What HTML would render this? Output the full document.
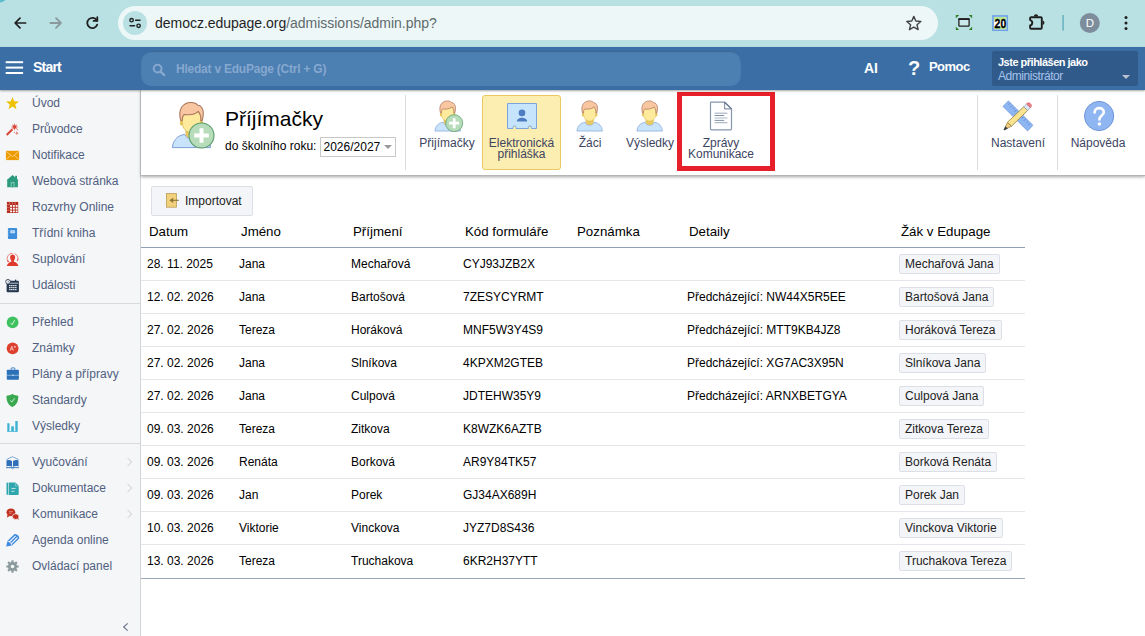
<!DOCTYPE html>
<html lang="cs">
<head>
<meta charset="utf-8">
<title>Přijímačky</title>
<style>
*{box-sizing:border-box;margin:0;padding:0}
html,body{width:1145px;height:636px;overflow:hidden;background:#fff}
body{font-family:"Liberation Sans",sans-serif;font-size:12px;color:#000;position:relative}
.abs{position:absolute}
/* ---------- browser chrome ---------- */
#chrome{position:absolute;left:0;top:0;width:1145px;height:47px;background:#b9e1e4}
#omni{position:absolute;left:118px;top:6px;width:820px;height:34px;border-radius:17px;background:#edf7f8}
#omni .tune{position:absolute;left:5px;top:5px;width:24px;height:24px;border-radius:12px;background:#b9e1e4}
#url{position:absolute;left:37px;top:8px;font-size:14px;line-height:18px;color:#1f1f1f;white-space:nowrap;letter-spacing:-0.02px}
#url span{color:#5f6a6b}
/* ---------- app header ---------- */
#hdr{position:absolute;left:0;top:47px;width:1145px;height:43px;background:#3a6ea5;box-shadow:0 1px 2px rgba(0,0,0,.35);z-index:5}
#search{position:absolute;left:141px;top:4px;width:600px;height:35px;border-radius:10px;background:#4c7fb2;box-shadow:inset 0 1px 1px rgba(30,60,100,.35)}
#search .ph{position:absolute;left:35px;top:11px;font-size:12px;line-height:14px;color:#86a8cf;font-weight:bold;white-space:nowrap;letter-spacing:-0.23px}
#start{position:absolute;left:33px;top:12px;font-size:14px;line-height:16px;color:#fff;font-weight:bold;letter-spacing:-0.8px}
.hl{position:absolute;left:6px;width:18px;height:2px;background:#fff}
#ai{position:absolute;left:864px;top:12px;font-size:14px;line-height:18px;font-weight:bold;color:#fff}
#q{position:absolute;left:908px;top:10px;font-size:20px;line-height:22px;font-weight:bold;color:#fff}
#pomoc{position:absolute;left:929px;top:12px;font-size:13px;line-height:16px;font-weight:bold;color:#fff;letter-spacing:-0.55px}
#user{position:absolute;left:992px;top:4px;width:146px;height:35px;background:#2f5a8a;border-radius:2px}
#user .l1{position:absolute;left:6px;top:5px;font-size:11px;line-height:13px;font-weight:bold;color:#fff;white-space:nowrap;letter-spacing:-0.5px}
#user .l2{position:absolute;left:6px;top:18px;font-size:12px;line-height:14px;color:#a6c2ea;white-space:nowrap;letter-spacing:-0.45px}
#user .tri{position:absolute;left:130px;top:24px;width:0;height:0;border-left:4px solid transparent;border-right:4px solid transparent;border-top:4px solid #b9c1ce}
/* ---------- sidebar ---------- */
#side{position:absolute;left:0;top:90px;width:141px;height:546px;background:#f5f6f8;border-right:1px solid #d3d3d5}
.mi{position:absolute;left:32px;font-size:12px;line-height:14px;color:#506080;white-space:nowrap}
.ic{position:absolute;left:5px;width:15px;height:15px}
.sep{position:absolute;left:0;width:140px;height:1px;background:#d8d9db}
.chev{position:absolute;left:128px;font-size:10px;color:#c3c8ce}
/* ---------- main ---------- */
#main{position:absolute;left:141px;top:90px;width:1004px;height:546px;background:#fff}
#tb{position:absolute;left:0;top:0;width:1004px;height:86px;background:#fff;border-bottom:1px solid #b5b5b5;box-shadow:0 1px 3px rgba(0,0,0,.35)}
.vs{position:absolute;top:5px;width:1px;height:75px;background:#dcdcdc}
#title{position:absolute;left:84px;top:16px;font-size:21px;line-height:26px;color:#000;white-space:nowrap}
#sub{position:absolute;left:84px;top:49px;font-size:12px;line-height:14px;color:#000;white-space:nowrap}
#sel{position:absolute;left:179px;top:47px;width:76px;height:20px;border:1px solid #c8c8c8;background:#fff;font-size:12px;line-height:18px;padding-left:2.5px;white-space:nowrap}
#sel i{position:absolute;right:3px;top:7px;width:0;height:0;border-left:4px solid transparent;border-right:4px solid transparent;border-top:4px solid #999}
.ti{position:absolute;text-align:center;font-size:12px;line-height:11px;color:#3c4462;white-space:nowrap}
#ep{position:absolute;left:341px;top:5px;width:79px;height:75px;background:#fcedb0;border:1px solid #ebc961;border-radius:3px}
#red{position:absolute;left:536px;top:2px;width:98px;height:79px;border:5px solid #e61f2b;border-top-width:4.5px}
#imp{position:absolute;left:10px;top:96px;width:102px;height:30px;background:#f4f5f9;border:1px solid #dcdfe6;border-radius:2px}
#imp span{position:absolute;left:33px;top:7px;font-size:12px;line-height:14px;color:#222}
/* ---------- table ---------- */
.th{position:absolute;top:134px;font-size:13.3px;line-height:16px;color:#000;white-space:nowrap}
#hline{position:absolute;left:0;top:157px;width:884px;height:1px;background:#8f9fb6}
.row{position:absolute;left:0;width:884px;height:33px;border-bottom:1px solid #e4e6ea}
.row span{position:absolute;top:9px;font-size:12px;line-height:14px;color:#000;white-space:nowrap}
.row b{position:absolute;left:758px;top:6px;height:20px;padding:0 5px;font-weight:normal;font-size:12px;line-height:18px;color:#222;background:#f4f5f9;border:1px solid #dcdfe6;border-radius:2px;white-space:nowrap}
.c1{left:6px}.c2{left:98px}.c3{left:210px}.c4{left:322px}.c6{left:546px}
#bline{position:absolute;left:0;top:488px;width:884px;height:1px;background:#9aa8bd}
</style>
</head>
<body>

<div id="chrome">
  <div id="omni"><div class="tune"></div><div id="url">democz.edupage.org<span>/admissions/admin.php?</span></div></div>

  <svg class="abs" style="left:0;top:0" width="1145" height="47" viewBox="0 0 1145 47">
    <path d="M0 0H5.4C3.6 1.4 1.8 2.2 0 2.6Z" fill="#5bbccb"/>
    <!-- back -->
    <g fill="none" stroke="#1f1f1f" stroke-width="1.7" stroke-linecap="round" stroke-linejoin="round">
      <path d="M25.6 23H15.4M20 18.1L15.1 23L20 27.9"/>
    </g>
    <!-- forward -->
    <g fill="none" stroke="#8a9a9c" stroke-width="1.8" stroke-linecap="round" stroke-linejoin="round">
      <path d="M50.4 23H60.6M56 18.1L60.9 23L56 27.9"/>
    </g>
    <!-- reload -->
    <g fill="none" stroke="#1f1f1f" stroke-width="1.8" stroke-linecap="round" stroke-linejoin="round">
      <path d="M96.9 20.6A5.1 5.1 0 1 0 97.2 24.6"/>
      <path d="M97.3 17.2V20.9H93.6" />
    </g>
    <!-- tune icon -->
    <g fill="none" stroke="#1f1f1f" stroke-width="1.4" stroke-linecap="round">
      <circle cx="131.6" cy="20.2" r="1.7"/><path d="M135.6 20.2H140"/>
      <circle cx="138.6" cy="25.8" r="1.7"/><path d="M130 25.8H134.6"/>
    </g>
    <!-- star -->
    <path d="M913.8 16.4l2 4.6 5 .45-3.8 3.3 1.15 4.9-4.35-2.6-4.35 2.6 1.15-4.9-3.8-3.3 5-.45z" fill="none" stroke="#444" stroke-width="1.4" stroke-linejoin="round"/>
    <!-- screenshot -->
    <g fill="#2f7d1f">
      <path d="M955.8 15H959.2L955.8 18.2Z"/><path d="M972.1 15H968.7L972.1 18.2Z"/>
      <path d="M955.8 29.9H959.2L955.8 26.7Z"/><path d="M972.1 29.9H968.7L972.1 26.7Z"/>
    </g>
    <rect x="958.9" y="19" width="10.2" height="7.1" rx=".6" fill="#c9e8eb" stroke="#231f20" stroke-width="1.3"/>
    <rect x="958.3" y="18.3" width="11.4" height="1.7" rx=".6" fill="#231f20"/>
    <!-- 20 -->
    <rect x="993" y="16" width="14.2" height="14.2" fill="#fff" stroke="#6fa3e8" stroke-width="1.7"/>
    <rect x="994" y="17" width="12.2" height="3.4" fill="#b9e78f"/>
    <rect x="994" y="26.4" width="12.2" height="2.8" fill="#b9e78f"/>
    <text x="994.6" y="28" font-family="Liberation Sans, sans-serif" font-weight="bold" font-size="13.6" fill="#000" textLength="11.6" lengthAdjust="spacingAndGlyphs" stroke="#000" stroke-width=".35">20</text>
    <!-- puzzle -->
    <path d="M1030.1 25.4V27.7a1 1 0 0 0 1 1H1040.8a1 1 0 0 0 1-1V18.25a1 1 0 0 0-1-1H1031.1a1 1 0 0 0-1 1V20.1A2.7 2.7 0 0 1 1030.1 25.4Z" fill="none" stroke="#1f1f1f" stroke-width="1.9" stroke-linejoin="round"/>
    <path d="M1033.8 16.6A2.2 2.4 0 0 1 1038.2 16.6Z" fill="#1f1f1f"/>
    <path d="M1042.6 20.5A2.6 2.3 0 0 1 1042.6 24.9Z" fill="#1f1f1f"/>
    <!-- divider -->
    <rect x="1062.3" y="15" width="1.6" height="15.6" fill="#6bb5c1"/>
    <!-- avatar -->
    <circle cx="1089.8" cy="23" r="10" fill="#7d8d9b"/>
    <text x="1089.8" y="27.2" font-family="Liberation Sans, sans-serif" font-size="11.5" text-anchor="middle" fill="#fff">D</text>
    <!-- kebab -->
    <circle cx="1126" cy="17.4" r="1.5" fill="#1f1f1f"/><circle cx="1126" cy="23" r="1.5" fill="#1f1f1f"/><circle cx="1126" cy="28.6" r="1.5" fill="#1f1f1f"/>
  </svg>
</div>
<div id="hdr">
  <svg class="abs" style="left:0;top:0" width="30" height="43"><rect x="5.7" y="14.2" width="17.4" height="2" fill="#fff"/><rect x="5.7" y="19.6" width="17.4" height="2" fill="#fff"/><rect x="5.7" y="25" width="17.4" height="2" fill="#fff"/></svg>
  <div id="start">Start</div>
  <div id="search"><svg class="abs" style="left:11px;top:12px" width="14" height="14" viewBox="0 0 14 14"><circle cx="5.6" cy="5.6" r="3.9" fill="none" stroke="#86a8cf" stroke-width="2"/><path d="M8.6 8.6L12.2 12.2" stroke="#86a8cf" stroke-width="2.4" stroke-linecap="round"/></svg><div class="ph">Hledat v EduPage (Ctrl + G)</div></div>
  <div id="ai">AI</div><div id="q">?</div><div id="pomoc">Pomoc</div>
  <div id="user"><div class="l1">Jste přihlášen jako</div><div class="l2">Administrátor</div><div class="tri"></div></div>
</div>
<div id="side">

  <svg class="abs" style="left:0;top:0" width="30" height="546" viewBox="0 90 30 546">
    <!-- 1 star -->
    <path d="M12.50 96.90L14.20 101.35L18.97 101.60L15.26 104.60L16.50 109.20L12.50 106.60L8.50 109.20L9.74 104.60L6.03 101.60L10.80 101.35Z" fill="#eec200"/>
    <!-- 2 wand -->
    <g fill="#d9463a" stroke="#d9463a">
      <path d="M6.7 134.9L12.4 129.2" stroke-width="2.1" stroke-linecap="butt" fill="none"/>
      <path d="M14.60 123.00L15.17 125.51L17.36 124.14L15.99 126.33L18.50 126.90L15.99 127.47L17.36 129.66L15.17 128.29L14.60 130.80L14.03 128.29L11.84 129.66L13.21 127.47L10.70 126.90L13.21 126.33L11.84 124.14L14.03 125.51Z" stroke="none"/>
      <path d="M16.90 131.10L17.32 132.78L19.00 133.20L17.32 133.62L16.90 135.30L16.48 133.62L14.80 133.20L16.48 132.78Z" stroke="none"/>
      <circle cx="14.2" cy="132.2" r=".5" stroke="none"/><circle cx="17.6" cy="129.8" r=".5" stroke="none"/>
    </g>
    <!-- 3 envelope -->
    <rect x="5.9" y="150.8" width="13.2" height="9.3" fill="#ee9b00"/>
    <path d="M6.2 151.4L12.5 156.6L18.8 151.4M6.2 159.6L10.6 155.2M18.8 159.6L14.4 155.2" fill="none" stroke="#fbe3b0" stroke-width=".7"/>
    <!-- 4 house -->
    <path d="M12.6 174.9L18.6 180.2H17.9V187.2H7.2V180.2H6.5Z" fill="#2c9a7c"/>
    <rect x="15.2" y="175.8" width="1.8" height="3.4" fill="#2c9a7c"/>
    <rect x="10.7" y="182.2" width="3.8" height="5" fill="#8fd0bc"/>
    <rect x="11.6" y="183.2" width="2" height="4" fill="#2c9a7c"/>
    <!-- 5 grid -->
    <rect x="6.9" y="201.9" width="11.3" height="11.1" fill="#b52a1c"/>
    <g fill="#fff">
      <rect x="10.1" y="205" width="1.9" height="1.8"/><rect x="12.9" y="205" width="1.9" height="1.8"/><rect x="15.7" y="205" width="1.9" height="1.8"/>
      <rect x="10.1" y="207.7" width="1.9" height="1.9"/><rect x="12.9" y="207.7" width="1.9" height="1.9"/><rect x="15.7" y="207.7" width="1.9" height="1.9"/>
      <rect x="10.1" y="210.5" width="1.9" height="1.8"/><rect x="12.9" y="210.5" width="1.9" height="1.8"/><rect x="15.7" y="210.5" width="1.9" height="1.8"/>
    </g>
    <path d="M9.6 201.9V204.6M12.4 201.9V204.6M15.2 201.9V204.6M6.9 204.7H9.6M6.9 207.4H9.6M6.9 210.2H9.6" stroke="#e9b9b2" stroke-width=".5"/>
    <!-- 6 book -->
    <rect x="7.9" y="228" width="9.2" height="11" rx="1" fill="#3d8fdc"/>
    <rect x="10.3" y="230.3" width="4.6" height="3" rx=".6" fill="#d4e8fa"/>
    <rect x="11.4" y="231.2" width="2.4" height="1.2" fill="#8ec0ee"/>
    <path d="M7.9 230.5h.8M7.9 233h.8M7.9 235.5h.8" stroke="#cfe3f7" stroke-width=".6"/>
    <!-- 7 person w arrows -->
    <g fill="#e03a2c">
      <ellipse cx="12.6" cy="257.5" rx="2.5" ry="3.1"/>
      <path d="M11.3 259.5h2.6v2.2c2.4 .5 4 1.8 4.4 4.3H6.9c.4-2.5 2-3.8 4.4-4.3z"/>
    </g>
    <path d="M8 261.6A5.4 5.4 0 0 1 12.6 253.2M14.6 253.6A5.4 5.4 0 0 1 17.4 261.2" fill="none" stroke="#e03a2c" stroke-width=".6"/>
    <path d="M7 260.6l1 1.6l1.4-1.2z M18.6 258.6l-1.4.6l.4 1.6z" fill="#e03a2c"/>
    <!-- 8 calendar -->
    <rect x="6.6" y="280.8" width="12.3" height="11.5" rx="1" fill="#24384f"/>
    <rect x="7.2" y="282.6" width="11.1" height="1.3" fill="#9aa5b3"/>
    <rect x="15" y="279.6" width="1.2" height="2.2" fill="#24384f"/>
    <circle cx="8" cy="281.7" r="2.3" fill="#f4f6f8" stroke="#24384f" stroke-width=".8"/>
    <path d="M8 280.6V281.8H8.9" stroke="#24384f" stroke-width=".5" fill="none"/>
    <g fill="#fff">
      <rect x="9.2" y="285" width="1.3" height="1.2"/><rect x="11.2" y="285" width="1.3" height="1.2"/><rect x="13.2" y="285" width="1.3" height="1.2"/><rect x="15.2" y="285" width="1.3" height="1.2"/>
      <rect x="9.2" y="287" width="1.3" height="1.2"/><rect x="11.2" y="287" width="1.3" height="1.2"/><rect x="13.2" y="287" width="1.3" height="1.2"/><rect x="15.2" y="287" width="1.3" height="1.2"/>
      <rect x="9.2" y="289" width="1.3" height="1.2"/><rect x="11.2" y="289" width="1.3" height="1.2"/><rect x="13.2" y="289" width="1.3" height="1.2"/><rect x="15.2" y="289" width="1.3" height="1.2"/>
    </g>
    <!-- 9 check circle -->
    <circle cx="12.6" cy="322.4" r="5.9" fill="#3fc160"/>
    <path d="M10.5 323.3L12.2 324.6L14.6 320.2" fill="none" stroke="#e9f8ed" stroke-width=".9"/>
    <!-- 10 A+ circle -->
    <circle cx="12.6" cy="348.3" r="5.9" fill="#de4030"/>
    <path d="M10.2 350.6L11.8 346.2L13.4 350.6M10.8 349.2H12.8M14 346.8H15.8M14.9 345.9V347.7" fill="none" stroke="#fbe3df" stroke-width=".7"/>
    <!-- 11 briefcase -->
    <path d="M11.2 369.8V368.6a.7 .7 0 0 1 .7-.7h2.2a.7 .7 0 0 1 .7 .7V369.8" fill="none" stroke="#2d72b8" stroke-width=".9"/>
    <rect x="6.8" y="369.7" width="12.1" height="10" rx=".8" fill="#2d72b8"/>
    <path d="M6.8 375.3H18.9" stroke="#c5daf0" stroke-width=".6"/>
    <rect x="12.2" y="374.6" width="1.4" height="1.5" fill="#c5daf0"/>
    <!-- 12 shield -->
    <path d="M12.4 394.1C14.4 395.3 16.4 395.7 18.3 395.7C18.5 401 16.6 405 12.4 407.1C8.2 405 6.3 401 6.5 395.7C8.4 395.7 10.4 395.3 12.4 394.1Z" fill="#3aa850"/>
    <path d="M10.3 400.6L11.9 402L14.6 398.4" fill="none" stroke="#e3f4e6" stroke-width=".9"/>
    <!-- 13 bars -->
    <g fill="#3bb3d3">
      <rect x="7.3" y="423.2" width="2.2" height="8.2"/><rect x="11.2" y="426.3" width="2.7" height="5.1"/><rect x="15.3" y="421" width="2.4" height="10.4"/>
      <rect x="7.3" y="431" width="10.4" height=".7"/>
    </g>
    <!-- 14 open book -->
    <g fill="#2f70b8">
      <path d="M6.5 460.4C8.4 459.8 10.4 460 12 460.9V466.8C10.4 466 8.4 465.9 6.5 466.4Z"/>
      <path d="M18.5 460.4C16.6 459.8 14.6 460 13 460.9V466.8C14.6 466 16.6 465.9 18.5 466.4Z"/>
      <rect x="6.1" y="467.2" width="12.8" height=".9"/>
    </g>
    <path d="M6.4 459.6L12.5 456.7L18.6 459.6M11.4 468.3L12.5 468.9L13.6 468.3" fill="none" stroke="#2f70b8" stroke-width=".6"/>
    <!-- 15 teal doc -->
    <rect x="6.5" y="482.6" width="1.5" height="12.2" rx=".5" fill="#2fa5ad"/>
    <path d="M8.6 482.5H15.4L18.7 485.8V494A.9 .9 0 0 1 17.8 494.9H8.6Z" fill="#2fa5ad"/>
    <path d="M15.3 482.7V486H18.6" fill="none" stroke="#a8dde0" stroke-width=".6"/>
    <path d="M11.4 488.4H15.6M11.4 491.3H14.4" stroke="#d5eff1" stroke-width=".9"/>
    <!-- 16 chat -->
    <g fill="#c2301f">
      <ellipse cx="10.9" cy="512.3" rx="4.4" ry="3.9"/>
      <path d="M7.6 514.6L6.8 517.4L10 516Z"/>
      <ellipse cx="15.6" cy="516.6" rx="3.3" ry="2.8" stroke="#f5f6f8" stroke-width=".7"/>
      <path d="M17 518.6L18.8 520L18 517.6Z"/>
    </g>
    <path d="M9 511.6H12.8M9 513.2H11.8" stroke="#f0c0b8" stroke-width=".6"/>
    <!-- 17 pencil/feather -->
    <path d="M6.1 546.6L7.6 540.8L14 534.5C15.8 532.8 20.6 537 18.9 539L12 545.4Z" fill="#3f8ade"/>
    <path d="M9.3 542L15.6 535.9M11 543.8L17.5 537.5" stroke="#f0f5fc" stroke-width="1.15"/>
    <path d="M7.7 541.2C9.6 541.2 11.4 543 11.6 545.2" fill="none" stroke="#f0f5fc" stroke-width=".8"/>
    <!-- 18 gear -->
    <path d="M18.71 565.42L18.71 567.58L16.97 567.57L16.42 568.90L17.65 570.12L16.12 571.65L14.90 570.42L13.57 570.97L13.58 572.71L11.42 572.71L11.43 570.97L10.10 570.42L8.88 571.65L7.35 570.12L8.58 568.90L8.03 567.57L6.29 567.58L6.29 565.42L8.03 565.43L8.58 564.10L7.35 562.88L8.88 561.35L10.10 562.58L11.43 562.03L11.42 560.29L13.58 560.29L13.57 562.03L14.90 562.58L16.12 561.35L17.65 562.88L16.42 564.10L16.97 565.43Z" fill="#8b9a9c"/>
    <circle cx="12.5" cy="566.5" r="1.8" fill="#f5f6f8"/>
  </svg>
  <svg class="abs" style="left:120px;top:360px" width="20" height="190" viewBox="120 450 20 190">
    <g fill="none" stroke="#c6cad0" stroke-width="1">
      <path d="M127.6 458L131.6 462L127.6 466"/>
      <path d="M127.6 484L131.6 488L127.6 492"/>
      <path d="M127.6 510L131.6 514L127.6 518"/>
    </g>
    <path d="M127.7 623.3L123.6 627L127.7 630.7" fill="none" stroke="#66728a" stroke-width="1.1"/>
  </svg>
  <div class="mi" style="top:6px">Úvod</div>
  <div class="mi" style="top:32px">Průvodce</div>
  <div class="mi" style="top:58px">Notifikace</div>
  <div class="mi" style="top:84px">Webová stránka</div>
  <div class="mi" style="top:110px">Rozvrhy Online</div>
  <div class="mi" style="top:136px">Třídní kniha</div>
  <div class="mi" style="top:162px">Suplování</div>
  <div class="mi" style="top:188px">Události</div>
  <div class="sep" style="top:213px"></div>
  <div class="mi" style="top:225px">Přehled</div>
  <div class="mi" style="top:251px">Známky</div>
  <div class="mi" style="top:277px">Plány a přípravy</div>
  <div class="mi" style="top:303px">Standardy</div>
  <div class="mi" style="top:329px">Výsledky</div>
  <div class="sep" style="top:353px"></div>
  <div class="mi" style="top:365px">Vyučování</div>
  <div class="mi" style="top:391px">Dokumentace</div>
  <div class="mi" style="top:417px">Komunikace</div>
  <div class="mi" style="top:443px">Agenda online</div>
  <div class="mi" style="top:469px">Ovládací panel</div>
</div>
<div id="main">
  <div id="tb">
    <div class="vs" style="left:264px"></div>
    <div class="vs" style="left:836px"></div>
    <div class="vs" style="left:916px"></div>

    <div id="ep"></div>
    <div id="red"></div>
    <!-- big icon: page (168,98) -> tb (27,8) -->
    <svg class="abs" style="left:27px;top:8px" width="48" height="52" viewBox="0 0 48 52">
      <path d="M4.4 49.6C4.8 42.6 9.7 37.2 16.7 36.4C17.6 39.2 20 40.6 23.5 40.6S29.4 39.2 30.3 36.4C37.3 37.2 42.2 42.6 42.6 49.6Z" fill="#c8e3fa" stroke="#7da0d8" stroke-width="1"/>
      <path d="M17.8 30h11.4v5.6c0 2.9-2.5 4.7-5.7 4.7s-5.7-1.8-5.7-4.7z" fill="#e9ca62" stroke="#d2ae48" stroke-width=".6"/>
      <ellipse cx="13.6" cy="24.8" rx="1.8" ry="2.8" fill="#e7c65c"/>
      <ellipse cx="33.4" cy="24.8" rx="1.8" ry="2.8" fill="#e7c65c"/>
      <path d="M14.4 17.5C14.4 11 32.6 11 32.6 17.5V25.2C32.6 30.2 28.6 34.6 23.5 34.6S14.4 30.2 14.4 25.2Z" fill="#fdea9c" stroke="#dcbb50" stroke-width=".8"/>
      <path d="M12.7 22.4C9.5 11.5 15 4.4 22.8 4.4C26.6 4.4 28.8 5.6 29.9 7.2C34.2 7.4 36.8 13.2 34.3 22.4L32.9 22.6C33.2 18.6 32.2 15.8 30.2 13.4C26.2 17.2 19.5 17 16.2 16.4C14.6 18 14.1 20 14.1 22.6Z" fill="#f8c6a0" stroke="#aa745b" stroke-width="1.05" stroke-linejoin="round"/>
    </svg>
    <svg class="abs" style="left:47px;top:32.3px" width="27" height="27" viewBox="0 0 27 27">
      <circle cx="13.5" cy="13.5" r="12.5" fill="#b6dcb9" stroke="#5b9b6b" stroke-width="1.1"/>
      <path d="M13.5 6.2V20.8M6.2 13.5H20.8" stroke="#fff" stroke-width="4"/>
    </svg>
    <!-- small prijimacky icon: page x434.5-463, y100.7-131.4 -->
    <svg class="abs" style="left:290.7px;top:7.8px" width="32" height="34.67" viewBox="0 0 48 52">
      <path d="M4.4 49.6C4.8 42.6 9.7 37.2 16.7 36.4C17.6 39.2 20 40.6 23.5 40.6S29.4 39.2 30.3 36.4C37.3 37.2 42.2 42.6 42.6 49.6Z" fill="#c8e3fa" stroke="#7da0d8" stroke-width="1"/>
      <path d="M17.8 30h11.4v5.6c0 2.9-2.5 4.7-5.7 4.7s-5.7-1.8-5.7-4.7z" fill="#e9ca62" stroke="#d2ae48" stroke-width=".6"/>
      <ellipse cx="13.6" cy="24.8" rx="1.8" ry="2.8" fill="#e7c65c"/>
      <ellipse cx="33.4" cy="24.8" rx="1.8" ry="2.8" fill="#e7c65c"/>
      <path d="M14.4 17.5C14.4 11 32.6 11 32.6 17.5V25.2C32.6 30.2 28.6 34.6 23.5 34.6S14.4 30.2 14.4 25.2Z" fill="#fdea9c" stroke="#dcbb50" stroke-width=".8"/>
      <path d="M12.7 22.4C9.5 11.5 15 4.4 22.8 4.4C26.6 4.4 28.8 5.6 29.9 7.2C34.2 7.4 36.8 13.2 34.3 22.4L32.9 22.6C33.2 18.6 32.2 15.8 30.2 13.4C26.2 17.2 19.5 17 16.2 16.4C14.6 18 14.1 20 14.1 22.6Z" fill="#f8c6a0" stroke="#aa745b" stroke-width="1.05" stroke-linejoin="round"/>
    </svg>
    <svg class="abs" style="left:304.4px;top:24px" width="18.4" height="18.4" viewBox="0 0 27 27">
      <circle cx="13.5" cy="13.5" r="12.5" fill="#b6dcb9" stroke="#5b9b6b" stroke-width="1.1"/>
      <path d="M13.5 6.2V20.8M6.2 13.5H20.8" stroke="#fff" stroke-width="4"/>
    </svg>
    <!-- zaci, vysledky -->
    <svg class="abs" style="left:433.2px;top:8.1px" width="32" height="34.67" viewBox="0 0 48 52">
      <path d="M4.4 49.6C4.8 42.6 9.7 37.2 16.7 36.4C17.6 39.2 20 40.6 23.5 40.6S29.4 39.2 30.3 36.4C37.3 37.2 42.2 42.6 42.6 49.6Z" fill="#c8e3fa" stroke="#7da0d8" stroke-width="1"/>
      <path d="M17.8 30h11.4v5.6c0 2.9-2.5 4.7-5.7 4.7s-5.7-1.8-5.7-4.7z" fill="#e9ca62" stroke="#d2ae48" stroke-width=".6"/>
      <ellipse cx="13.6" cy="24.8" rx="1.8" ry="2.8" fill="#e7c65c"/>
      <ellipse cx="33.4" cy="24.8" rx="1.8" ry="2.8" fill="#e7c65c"/>
      <path d="M14.4 17.5C14.4 11 32.6 11 32.6 17.5V25.2C32.6 30.2 28.6 34.6 23.5 34.6S14.4 30.2 14.4 25.2Z" fill="#fdea9c" stroke="#dcbb50" stroke-width=".8"/>
      <path d="M12.7 22.4C9.5 11.5 15 4.4 22.8 4.4C26.6 4.4 28.8 5.6 29.9 7.2C34.2 7.4 36.8 13.2 34.3 22.4L32.9 22.6C33.2 18.6 32.2 15.8 30.2 13.4C26.2 17.2 19.5 17 16.2 16.4C14.6 18 14.1 20 14.1 22.6Z" fill="#f8c6a0" stroke="#aa745b" stroke-width="1.05" stroke-linejoin="round"/>
    </svg>
    <svg class="abs" style="left:493.2px;top:8.1px" width="32" height="34.67" viewBox="0 0 48 52">
      <path d="M4.4 49.6C4.8 42.6 9.7 37.2 16.7 36.4C17.6 39.2 20 40.6 23.5 40.6S29.4 39.2 30.3 36.4C37.3 37.2 42.2 42.6 42.6 49.6Z" fill="#c8e3fa" stroke="#7da0d8" stroke-width="1"/>
      <path d="M17.8 30h11.4v5.6c0 2.9-2.5 4.7-5.7 4.7s-5.7-1.8-5.7-4.7z" fill="#e9ca62" stroke="#d2ae48" stroke-width=".6"/>
      <ellipse cx="13.6" cy="24.8" rx="1.8" ry="2.8" fill="#e7c65c"/>
      <ellipse cx="33.4" cy="24.8" rx="1.8" ry="2.8" fill="#e7c65c"/>
      <path d="M14.4 17.5C14.4 11 32.6 11 32.6 17.5V25.2C32.6 30.2 28.6 34.6 23.5 34.6S14.4 30.2 14.4 25.2Z" fill="#fdea9c" stroke="#dcbb50" stroke-width=".8"/>
      <path d="M12.7 22.4C9.5 11.5 15 4.4 22.8 4.4C26.6 4.4 28.8 5.6 29.9 7.2C34.2 7.4 36.8 13.2 34.3 22.4L32.9 22.6C33.2 18.6 32.2 15.8 30.2 13.4C26.2 17.2 19.5 17 16.2 16.4C14.6 18 14.1 20 14.1 22.6Z" fill="#f8c6a0" stroke="#aa745b" stroke-width="1.05" stroke-linejoin="round"/>
    </svg>
    <!-- contact card: page x507-537, y103-129 -->
    <svg class="abs" style="left:365px;top:12px" width="32" height="28" viewBox="0 0 32 28">
      <path d="M1.5 1.5H30.5V26.5H25.4V25.4a1.5 1.5 0 0 0 -3 0V26.5H10V25.4a1.5 1.5 0 0 0 -3 0V26.5H1.5Z" fill="#c6e5fd" stroke="#7ca5de" stroke-width="1"/>
      <circle cx="16" cy="10.9" r="3.3" fill="#4f7cc0"/>
      <path d="M10.9 19.6C10.9 14.6 21.1 14.6 21.1 19.6Z" fill="#4f7cc0"/>
    </svg>
    <!-- document: page x710-732.1, y101.5-130.3 -->
    <svg class="abs" style="left:567px;top:10px" width="28" height="34" viewBox="0 0 28 34">
      <path d="M3.2 2.1H16.6L23.5 8.9V29.1a.7 .7 0 0 1 -.7 .7H3.2a.7 .7 0 0 1 -.7 -.7V2.8a.7 .7 0 0 1 .7 -.7Z" fill="#fff" stroke="#8696ad" stroke-width="1.2" stroke-linejoin="round"/>
      <path d="M16.6 2.1V8.9H23.5" fill="none" stroke="#8696ad" stroke-width="1.2" stroke-linejoin="round"/>
      <path d="M16.6 2.1L23.5 8.9" stroke="#64748b" stroke-width="1.2"/>
      <path d="M6.6 13.2H19.4M6.6 22.7H19.4" stroke="#8e9db3" stroke-width=".9"/>
      <path d="M6.6 15.5H16.2M6.6 20.4H16.2" stroke="#73839b" stroke-width=".9"/>
      <path d="M6.6 18H19.4" stroke="#b9c3d2" stroke-width="1.2"/>
    </svg>
    <!-- ruler+pencil: svg at page (1002,100) -->
    <svg class="abs" style="left:861px;top:10px" width="32" height="32" viewBox="0 0 32 32">
      <path d="M6.4 0.9L1 6.4L25.6 30.9L30.9 25.3Z" fill="#8db6f2" stroke="#6d98da" stroke-width=".8" stroke-linejoin="round"/>
      <path d="M7.6 3.4l-1.2 1.2M9.8 5.6l-1.7 1.7M12 7.8l-1.2 1.2M14.2 10l-1.7 1.7M21.2 17l-1.2 1.2M23.4 19.2l-1.7 1.7M25.6 21.4l-1.2 1.2M27.8 23.6l-1.7 1.7" stroke="#4f79c2" stroke-width=".8"/>
      <path d="M21.8 6.7L25.6 10.5L9.5 26.2L5.4 22.4Z" fill="#fbe48f" stroke="#9c8a4e" stroke-width=".9" stroke-linejoin="round"/>
      <path d="M5.4 22.4L9.5 26.2L2 30Z" fill="#f6c978" stroke="#9c8a4e" stroke-width=".8" stroke-linejoin="round"/>
      <path d="M3.5 26.8L5.4 28.4L2 30Z" fill="#27364e" stroke="#27364e" stroke-width=".6" stroke-linejoin="round"/>
      <path d="M21.8 6.7L24.6 3.9L28.4 7.6L25.6 10.5Z" fill="#dde8f6" stroke="#8a97ab" stroke-width=".7" stroke-linejoin="round"/>
      <path d="M24.6 3.9C26.6 0.8 31.6 5.4 28.4 7.6Z" fill="#f08388" stroke="#cf5a63" stroke-width=".7" stroke-linejoin="round"/>
    </svg>
    <!-- help circle: page centre 1099.1,116 r14.8 -->
    <svg class="abs" style="left:942px;top:10px" width="32" height="32" viewBox="0 0 32 32">
      <circle cx="16.1" cy="16" r="14.6" fill="#90b6f1" stroke="#6c95d8" stroke-width="1"/>
      <path d="M11.6 12.4C11.6 6.6 20.8 6.8 20.8 12.2C20.8 15.6 16.4 15.6 16.4 19.4" fill="none" stroke="#fff" stroke-width="2.6" stroke-linecap="round"/>
      <circle cx="16.4" cy="24" r="1.8" fill="#fff"/>
    </svg>
    <div id="title">Příjímačky</div>
    <div id="sub">do školního roku:</div>
    <div id="sel">2026/2027<i></i></div>
    <div class="ti" style="left:266px;width:80px;top:48px">Přijímačky</div>
    <div class="ti" style="left:341px;width:79px;top:48px">Elektronická<br>přihláška</div>
    <div class="ti" style="left:419px;width:60px;top:48px">Žáci</div>
    <div class="ti" style="left:474px;width:70px;top:48px">Výsledky</div>
    <div class="ti" style="left:537px;width:86px;top:48px">Zprávy<br>Komunikace</div>
    <div class="ti" style="left:837px;width:80px;top:48px">Nastavení</div>
    <div class="ti" style="left:917px;width:80px;top:48px">Nápověda</div>
  </div>
  <div id="imp"><svg class="abs" style="left:-1px;top:-1px" width="40" height="30" viewBox="0 0 40 30"><rect x="15.4" y="7.6" width="10" height="13.6" fill="#f3d07b" stroke="#b89d58" stroke-width=".8"/><path d="M27.8 14.3H20.6" stroke="#8a7436" stroke-width="1.1" fill="none"/><path d="M18.4 14.3L22.2 11.7V16.9Z" fill="#8a7436"/></svg><span>Importovat</span></div>
  <div class="th" style="left:8px">Datum</div>
  <div class="th" style="left:100px">Jméno</div>
  <div class="th" style="left:212px">Příjmení</div>
  <div class="th" style="left:324px">Kód formuláře</div>
  <div class="th" style="left:436px">Poznámka</div>
  <div class="th" style="left:548px">Detaily</div>
  <div class="th" style="left:760px">Žák v Edupage</div>
  <div id="hline"></div>
  <div class="row" style="top:158px"><span class="c1">28. 11. 2025</span><span class="c2">Jana</span><span class="c3">Mechařová</span><span class="c4">CYJ93JZB2X</span><b>Mechařová Jana</b></div>
  <div class="row" style="top:191px"><span class="c1">12. 02. 2026</span><span class="c2">Jana</span><span class="c3">Bartošová</span><span class="c4">7ZESYCYRMT</span><span class="c6">Předcházející: NW44X5R5EE</span><b>Bartošová Jana</b></div>
  <div class="row" style="top:224px"><span class="c1">27. 02. 2026</span><span class="c2">Tereza</span><span class="c3">Horáková</span><span class="c4">MNF5W3Y4S9</span><span class="c6">Předcházející: MTT9KB4JZ8</span><b>Horáková Tereza</b></div>
  <div class="row" style="top:257px"><span class="c1">27. 02. 2026</span><span class="c2">Jana</span><span class="c3">Slníkova</span><span class="c4">4KPXM2GTEB</span><span class="c6">Předcházející: XG7AC3X95N</span><b>Slníkova Jana</b></div>
  <div class="row" style="top:290px"><span class="c1">27. 02. 2026</span><span class="c2">Jana</span><span class="c3">Culpová</span><span class="c4">JDTEHW35Y9</span><span class="c6">Předcházející: ARNXBETGYA</span><b>Culpová Jana</b></div>
  <div class="row" style="top:323px"><span class="c1">09. 03. 2026</span><span class="c2">Tereza</span><span class="c3">Zitkova</span><span class="c4">K8WZK6AZTB</span><b>Zitkova Tereza</b></div>
  <div class="row" style="top:356px"><span class="c1">09. 03. 2026</span><span class="c2">Renáta</span><span class="c3">Borková</span><span class="c4">AR9Y84TK57</span><b>Borková Renáta</b></div>
  <div class="row" style="top:389px"><span class="c1">09. 03. 2026</span><span class="c2">Jan</span><span class="c3">Porek</span><span class="c4">GJ34AX689H</span><b>Porek Jan</b></div>
  <div class="row" style="top:422px"><span class="c1">10. 03. 2026</span><span class="c2">Viktorie</span><span class="c3">Vinckova</span><span class="c4">JYZ7D8S436</span><b>Vinckova Viktorie</b></div>
  <div class="row" style="top:455px;border-bottom:none"><span class="c1">13. 03. 2026</span><span class="c2">Tereza</span><span class="c3">Truchakova</span><span class="c4">6KR2H37YTT</span><b>Truchakova Tereza</b></div>
  <div id="bline"></div>
</div>
</body>
</html>
